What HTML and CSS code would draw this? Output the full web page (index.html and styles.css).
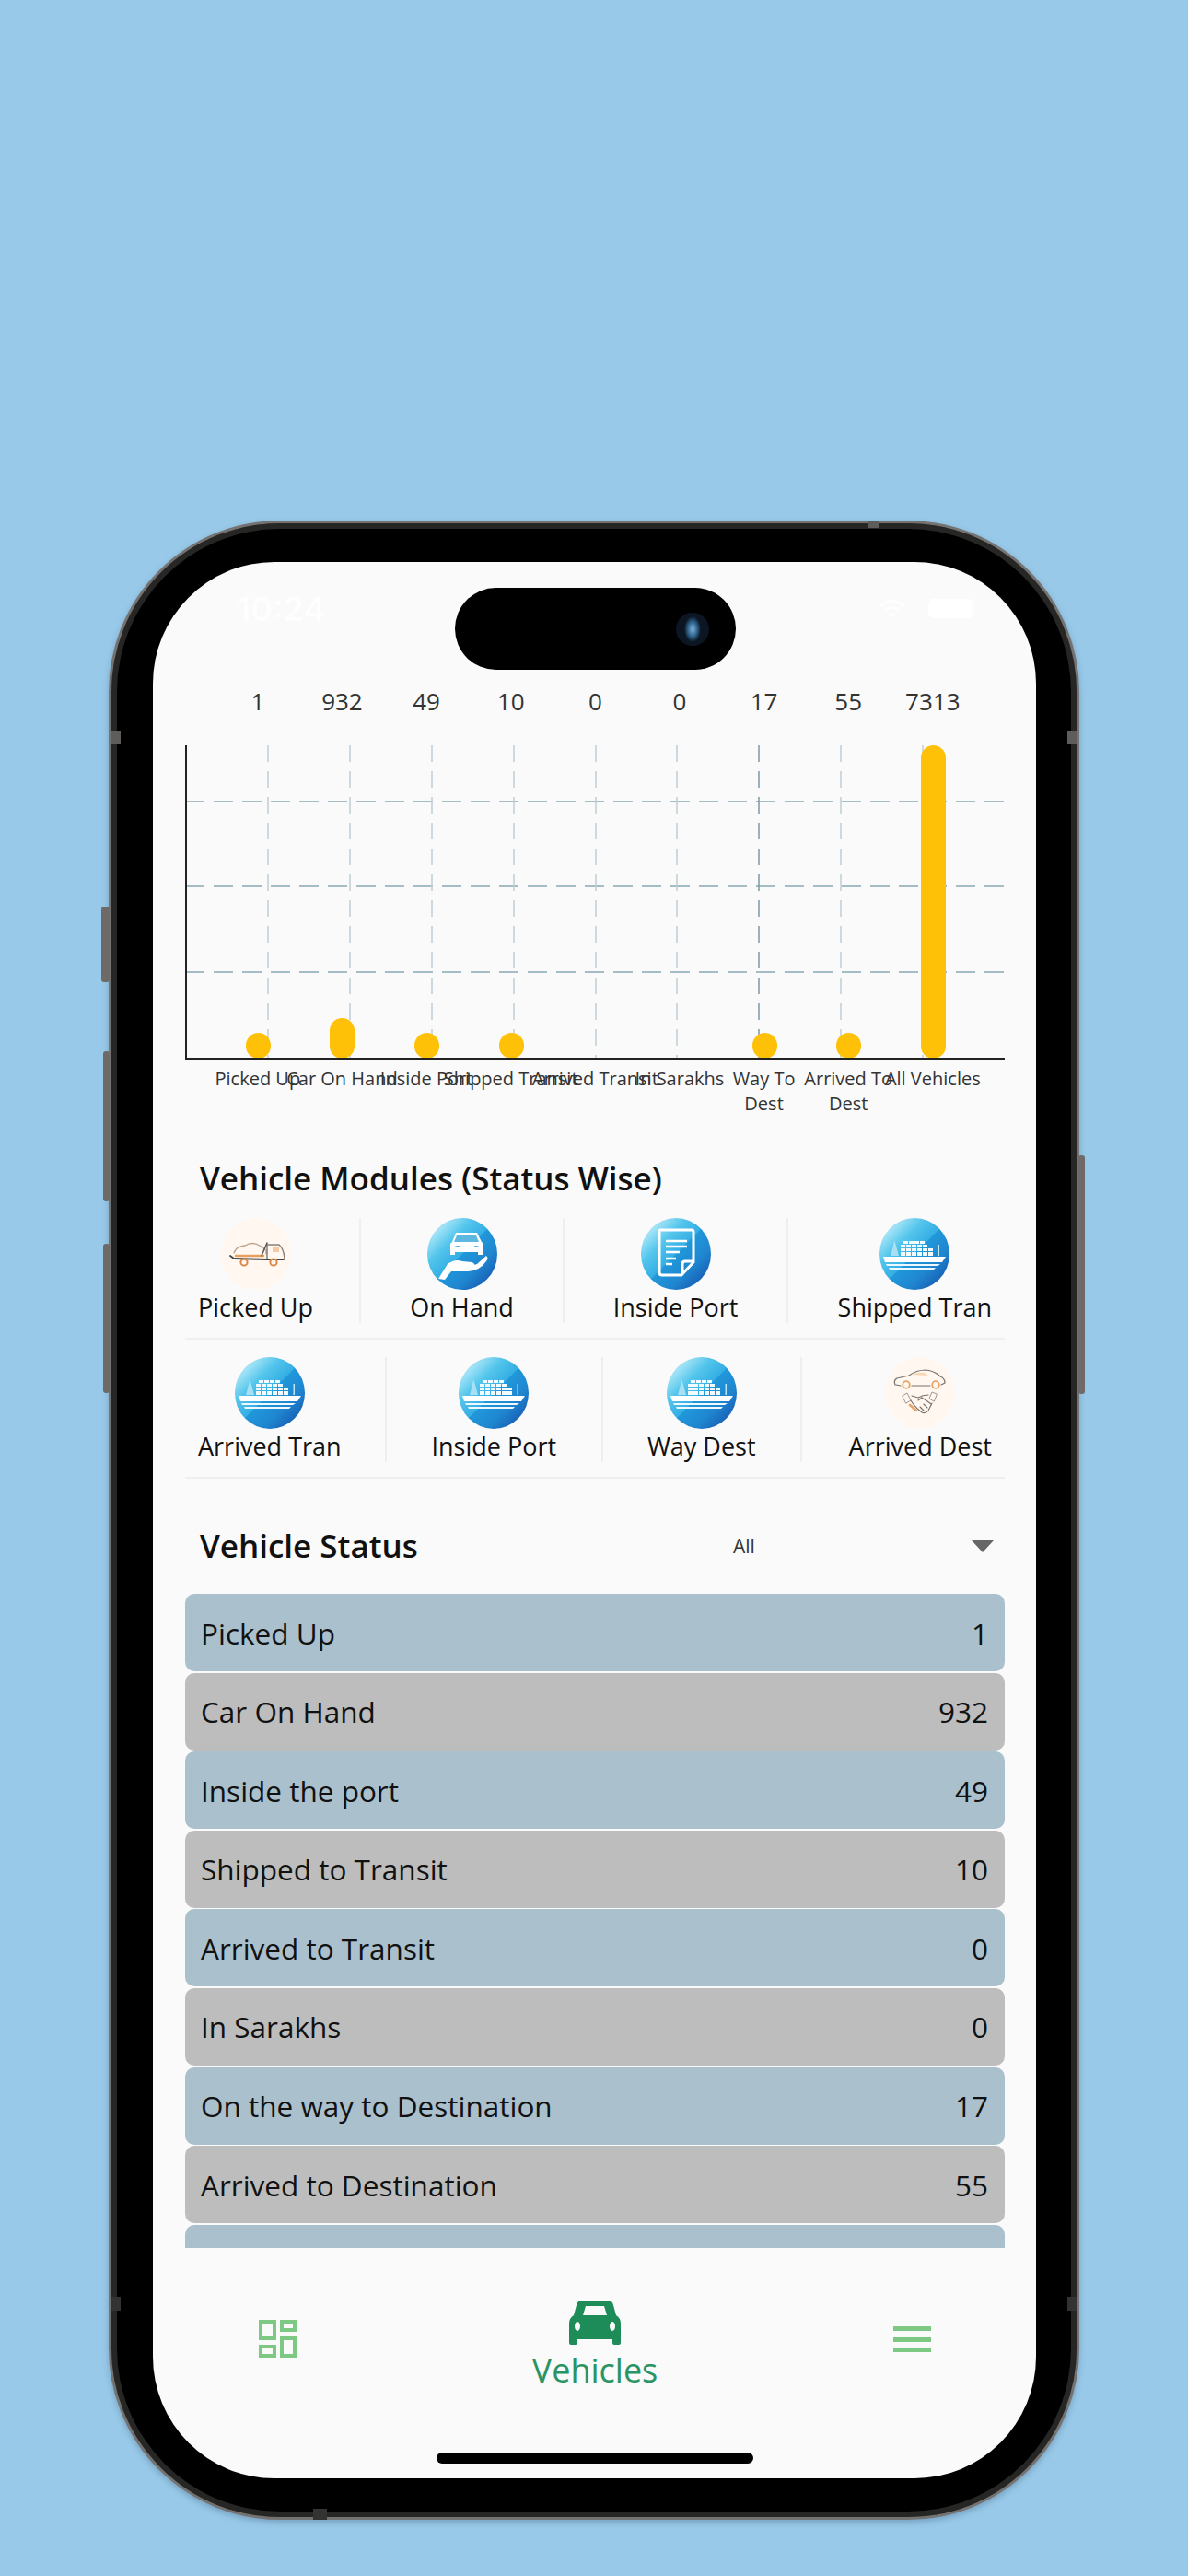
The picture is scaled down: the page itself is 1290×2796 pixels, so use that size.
FILE: index.html
```html
<!DOCTYPE html>
<html lang="en">
<head>
<meta charset="utf-8">
<title>Vehicles</title>
<link rel="stylesheet" href="styles.css">
</head>
<body>
<div class="phone">
  <span class="key key-mute"></span><span class="key key-up"></span><span class="key key-down"></span><span class="key key-side"></span>
  <span class="band band-tl"></span><span class="band band-tr"></span><span class="band band-bl"></span><span class="band band-br"></span><span class="band band-top"></span><span class="band band-bottom"></span>
  <div class="screen">
    <div class="island"><span class="lens"></span></div>
    <div class="status-bar">
      <span class="time">10:24</span>
      <span class="status-icons">
        <svg class="wifi" viewBox="0 0 30 22" width="30" height="22" fill="none" stroke="#fff" stroke-width="3.4">
          <path d="M2 8 Q15 -3 28 8"/><path d="M7 13 Q15 6 23 13"/><path d="M11.5 18 Q15 15 18.5 18"/>
        </svg>
        <span class="battery"></span>
      </span>
    </div>

    <div class="content">
      <div class="chart-grid values">
        <span>1</span><span>932</span><span>49</span><span>10</span><span>0</span><span>0</span><span>17</span><span>55</span><span>7313</span>
      </div>
      <svg class="plot" viewBox="0 0 890 342" width="890" height="342">
        <g class="grid-h">
          <line x1="0" x2="890" y1="61" y2="61"/><line x1="0" x2="890" y1="153" y2="153"/><line x1="0" x2="890" y1="246" y2="246"/>
        </g>
        <g class="grid-v">
          <line x1="90" x2="90" y1="0" y2="340"/><line x1="179" x2="179" y1="0" y2="340"/><line x1="268" x2="268" y1="0" y2="340"/><line x1="357" x2="357" y1="0" y2="340"/><line x1="446" x2="446" y1="0" y2="340"/><line x1="534" x2="534" y1="0" y2="340"/><line class="dark" x1="623" x2="623" y1="0" y2="340"/><line x1="712" x2="712" y1="0" y2="340"/><line x1="801" x2="801" y1="0" y2="340"/>
        </g>
        <g class="bars">
          <rect x="66" y="312" width="27" height="28" rx="13.5"/>
          <rect x="157" y="296" width="27" height="44" rx="13.5"/>
          <rect x="249" y="312" width="27" height="28" rx="13.5"/>
          <rect x="341" y="312" width="27" height="28" rx="13.5"/>
          <rect x="616" y="312" width="27" height="28" rx="13.5"/>
          <rect x="707" y="312" width="27" height="28" rx="13.5"/>
          <rect x="799" y="0" width="27" height="340" rx="13.5"/>
        </g>
        <path class="axis" d="M1 0V340H890"/>
      </svg>
      <div class="chart-grid labels">
        <span>Picked Up</span><span>Car On Hand</span><span>Inside Port</span><span>Shipped Transit</span><span>Arrived Transit</span><span>In Sarakhs</span><span>Way To<br>Dest</span><span>Arrived To<br>Dest</span><span>All Vehicles</span>
      </div>

      <h2 class="section-title modules-title">Vehicle Modules (Status Wise)</h2>

      <div class="module-row row-one">
        <div class="module first">
          <div class="module-inner">
            <span class="badge peach">
              <svg viewBox="0 0 76 78" width="76" height="78" fill="none" stroke-linecap="round" stroke-linejoin="round">
                <path d="M10 41 L14 44 L50 45 L68 45" stroke="#444" stroke-width="1.8"/>
                <path d="M14 38 Q16 31 26 30 Q34 25 42 30 L49 35 L49 39" stroke="#b9a28e" stroke-width="1.3"/>
                <path d="M16 41 L46 41" stroke="#e6a05f" stroke-width="2.4"/>
                <path d="M50 44 V29 H63 Q68 33 69 44" stroke="#8a8078" stroke-width="1.5"/>
                <path d="M56 31 H63 V37 H56Z" fill="#f6c9a0" stroke="none"/>
                <path d="M44 41 L50 27" stroke="#555" stroke-width="1.5"/>
                <circle cx="25" cy="48" r="3.6" stroke="#d98a48" stroke-width="2"/>
                <circle cx="57" cy="48" r="3.6" stroke="#d98a48" stroke-width="2"/>
              </svg>
            </span>
            <span class="module-label">Picked Up</span>
          </div>
        </div>
        <div class="module">
          <div class="module-inner">
            <span class="badge blue">
              <svg viewBox="0 0 76 78" width="76" height="78">
                <path d="M31 16 H54 L59 26 L61 28 V40 H55 V37 H30 V40 H25 V28 L27 26Z" fill="#fff"/>
                <path d="M32 19 H53 L56 26 H29Z M29 30 L35 32 V30Z M57 30 L51 32 V30Z" fill="#5cb8e0"/>
                <path d="M12 66 L22 50 Q30 44 38 47 L48 48 Q53 49 50 53 L40 54 L54 50 L64 41 Q67 43 64 47 Q56 58 44 58 L26 58 L19 67Z" fill="#fff"/>
              </svg>
            </span>
            <span class="module-label">On Hand</span>
          </div>
        </div>
        <div class="module">
          <div class="module-inner">
            <span class="badge blue">
              <svg viewBox="0 0 76 78" width="76" height="78" fill="none" stroke="#fff">
                <path d="M21 13 H55 Q57 13 57 15 V48 L44 62 H23 Q20 62 20 59 V15 Q20 13 21 13Z" stroke-width="3"/>
                <path d="M45 60 V50 Q45 47 48 47 H57" stroke-width="3"/>
                <path d="M27 25 H50 M27 31 H50 M27 37 H42 M27 44 H38 M27 50 H34" stroke-width="2.4"/>
              </svg>
            </span>
            <span class="module-label">Inside Port</span>
          </div>
        </div>
        <div class="module last">
          <div class="module-inner">
            <span class="badge blue"><svg viewBox="0 0 76 78" width="76" height="78"><use href="#ship"/></svg></span>
            <span class="module-label">Shipped Tran</span>
          </div>
        </div>
      </div>

      <div class="module-row row-two">
        <div class="module first">
          <div class="module-inner">
            <span class="badge blue">
              <svg viewBox="0 0 76 78" width="76" height="78">
                <g id="ship">
                  <path d="M4 42 H72 L68 48 H6Z" fill="#fff"/>
                  <path d="M7 50 H66 L63 52 H8Z M10 54 H61 L59 56 H11Z" fill="#eef9fd"/>
                  <path d="M12 41 L15 30 L16 24 L18 30 L21 41Z" fill="#bfe6f5" fill-opacity="0.8"/>
                  <path d="M23 29 H28 V32 H23Z M29 29 H34 V32 H29Z M35 29 H40 V32 H35Z M41 29 H46 V32 H41Z M47 29 H52 V32 H47Z M23 33 H28 V36 H23Z M29 33 H34 V36 H29Z M35 33 H40 V36 H35Z M41 33 H46 V36 H41Z M47 33 H52 V36 H47Z M53 33 H58 V36 H53Z M23 37 H28 V41 H23Z M29 37 H34 V41 H29Z M35 37 H40 V41 H35Z M41 37 H46 V41 H41Z M47 37 H52 V41 H47Z M53 37 H58 V41 H53Z M26 25 H31 V28 H26Z M32 25 H37 V28 H32Z M38 25 H43 V28 H38Z M44 25 H49 V28 H44Z" fill="#f2fbfe"/>
                  <path d="M63.500 41 V29 H65 V41Z" fill="#bfe6f5"/>
                </g>
              </svg>
            </span>
            <span class="module-label">Arrived Tran</span>
          </div>
        </div>
        <div class="module">
          <div class="module-inner">
            <span class="badge blue"><svg viewBox="0 0 76 78" width="76" height="78"><use href="#ship"/></svg></span>
            <span class="module-label">Inside Port</span>
          </div>
        </div>
        <div class="module">
          <div class="module-inner">
            <span class="badge blue"><svg viewBox="0 0 76 78" width="76" height="78"><use href="#ship"/></svg></span>
            <span class="module-label">Way Dest</span>
          </div>
        </div>
        <div class="module last">
          <div class="module-inner">
            <span class="badge peach">
              <svg viewBox="0 0 76 78" width="76" height="78" fill="none" stroke-linecap="round" stroke-linejoin="round">
                <path d="M11 30 Q9 25 13 23 L26 20 Q34 14 44 14 Q54 15 60 21 Q65 23 65 28 L61 30 M49 31 H29 M17 31 L12 30" stroke="#77716c" stroke-width="1.2"/>
                <path d="M29 19 Q35 16 43 17 L47 20 Z" fill="#f9d7b5" stroke="none"/>
                <circle cx="23" cy="30" r="3.8" stroke="#e8a468" stroke-width="1.8"/>
                <circle cx="55" cy="30" r="3.8" stroke="#e8a468" stroke-width="1.8"/>
                <path d="M19 42 L24 39 L28 47 L23 50Z M56 40 L51 38 L48 45 L53 48Z" stroke="#a0968e" stroke-width="1"/>
                <path d="M29 42 L36 44 Q41 41 47 41 M28 47 Q32 54 40 60 Q44 62 47 58 L51 50 M36 47 L40 44 L46 48 L50 51 M38 54 L42 58 M42 51 L46 55" stroke="#77716c" stroke-width="1.1"/>
                <path d="M27 52 L34 58" stroke="#e8a468" stroke-width="2.6"/>
              </svg>
            </span>
            <span class="module-label">Arrived Dest</span>
          </div>
        </div>
      </div>

      <div class="status-head">
        <h2 class="section-title">Vehicle Status</h2>
        <span class="select-value">All</span>
        <span class="select-caret"></span>
      </div>

      <ul class="status-list">
        <li class="status-row"><span>Picked Up</span><span>1</span></li>
        <li class="status-row"><span>Car On Hand</span><span>932</span></li>
        <li class="status-row"><span>Inside the port</span><span>49</span></li>
        <li class="status-row"><span>Shipped to Transit</span><span>10</span></li>
        <li class="status-row"><span>Arrived to Transit</span><span>0</span></li>
        <li class="status-row"><span>In Sarakhs</span><span>0</span></li>
        <li class="status-row"><span>On the way to Destination</span><span>17</span></li>
        <li class="status-row"><span>Arrived to Destination</span><span>55</span></li>
        <li class="status-row"></li>
      </ul>
    </div>

    <nav class="tabbar">
      <svg class="tab-grid" viewBox="0 0 41 41" width="41" height="41" fill="none" stroke="#7dc883" stroke-width="4">
        <rect x="2" y="2" width="15" height="18"/><rect x="25" y="2" width="14" height="9"/><rect x="2" y="29" width="15" height="10"/><rect x="25" y="20" width="14" height="19"/>
      </svg>
      <div class="tab-active">
        <svg viewBox="0 0 56 48" width="56" height="48">
          <path fill="#1e8c58" fill-rule="evenodd" d="M14 0 H42 Q47 0 48 5 L51 16 Q56 19 56 25 V46 Q56 48 54 48 H49 Q47 48 47 46 V42 H9 V46 Q9 48 7 48 H2 Q0 48 0 46 V25 Q0 19 5 16 L8 5 Q9 0 14 0Z M18 6 L15 16 H41 L38 6Z M9 23 A3 5 0 1 0 9 33 A3 5 0 1 0 9 23Z M47 23 A3 5 0 1 0 47 33 A3 5 0 1 0 47 23Z"/>
        </svg>
        <span class="tab-label">Vehicles</span>
      </div>
      <div class="tab-menu"><span></span><span></span><span></span></div>
    </nav>
    <span class="home-indicator"></span>
  </div>
</div>
</body>
</html>
```

FILE: styles.css
```css
* { box-sizing: border-box; }

html, body { margin: 0; padding: 0; }

body {
  width: 1290px;
  height: 2796px;
  background: #98c9e8;
  padding: 565px 0 0 118px;
  font-family: "Open Sans", "Noto Sans", sans-serif;
  color: #111;
  overflow: hidden;
}

.phone {
  position: relative;
  width: 1054px;
  height: 2170px;
  padding: 45px 47px 45px 48px;
  background: #000;
  border-radius: 186px;
  border: 3px solid #757372;
  box-shadow: inset 0 0 0 6px #262625, 0 3px 6px rgba(60, 90, 120, 0.35);
}

.key { position: absolute; background: #6e6a68; border-radius: 3px; }
.key-mute { left: -11px; top: 416px; width: 9px; height: 82px; }
.key-up { left: -9px; top: 573px; width: 7px; height: 163px; }
.key-down { left: -9px; top: 782px; width: 7px; height: 162px; }
.key-side { right: -9px; top: 686px; width: 7px; height: 259px; }

.band { position: absolute; background: #5e5d5c; }
.band-tl { left: -1px; top: 225px; width: 11px; height: 15px; }
.band-tr { right: -1px; top: 225px; width: 11px; height: 15px; }
.band-bl { left: -1px; top: 1925px; width: 11px; height: 15px; background: #333; }
.band-br { right: -1px; top: 1925px; width: 11px; height: 15px; background: #333; }
.band-top { top: -3px; left: 822px; width: 12px; height: 8px; }
.band-bottom { bottom: -3px; left: 219px; width: 15px; height: 12px; background: #333; }

.screen {
  position: relative;
  margin: -3px 0 0 -3px;
  width: 959px;
  height: 2080px;
  background: #fafafa;
  border-radius: 132px;
  overflow: hidden;
  display: flex;
  flex-direction: column;
}

.island {
  position: absolute;
  left: 328px;
  top: 28px;
  width: 305px;
  height: 89px;
  border-radius: 45px;
  background: #000;
}

.lens {
  position: absolute;
  left: 240px;
  top: 27px;
  width: 36px;
  height: 36px;
  border-radius: 50%;
  background: radial-gradient(ellipse 9px 14px at 50% 50%, #7fb4dc 0, #2c5d86 60%, #0b1622 100%), #06080c;
}

.status-bar {
  height: 130px;
  flex: none;
  display: flex;
  justify-content: space-between;
  padding: 29px 68px 0 91px;
  color: #fff;
}

.time { font-family: "Inter", sans-serif; font-size: 36px; line-height: 44px; font-weight: 600; opacity: 0.85; }

.status-icons { display: flex; gap: 24px; align-items: flex-start; padding-top: 11px; }
.wifi { opacity: 0.8; }
.battery { width: 49px; height: 21px; border-radius: 6px; background: #fff; }

.content { padding: 0 34px 0 35px; flex: none; }

.chart-grid {
  display: grid;
  grid-template-columns: repeat(9, 91.625px);
  margin-left: 33px;
  text-align: center;
}

.chart-grid span { white-space: nowrap; justify-self: center; }

.values { height: 42px; font-size: 26px; line-height: 42px; color: #333; }

.plot { display: block; margin-top: 27px; }

.grid-h line { stroke: #a4bcc4; stroke-width: 2; stroke-dasharray: 21 10; }
.grid-v line { stroke: #c0ced6; stroke-width: 1.5; stroke-dasharray: 18 10; }
.grid-v line.dark { stroke: #7f99a8; }
.bars rect { fill: #ffc107; }
.axis { fill: none; stroke: #222; stroke-width: 2; }

.labels { margin-top: 6px; font-size: 20px; line-height: 27px; color: #333; height: 54px; }

.section-title { margin: 0; font-size: 35px; line-height: 50px; font-weight: 600; color: #111; }

.modules-title { margin: 43px 0 0 16px; }

.module-row {
  display: grid;
  padding-bottom: 16px;
  border-bottom: 2px solid #efefef;
}

.row-one { grid-template-columns: 191px 221px 243px 235px; margin-top: 18px; }
.row-two { grid-template-columns: 219px 234.5px 216.5px 220px; margin-top: 19px; }

.module {
  display: flex;
  justify-content: center;
  height: 114px;
  border-right: 2px solid #efefef;
}

.module.first { justify-content: flex-start; padding-left: 14px; }
.module.last { justify-content: flex-end; padding-right: 14px; border-right: 0; }

.module-inner { display: flex; flex-direction: column; align-items: center; }

.badge { display: block; width: 76px; height: 78px; border-radius: 50%; flex: none; }
.badge svg { display: block; }

.peach { background: #fff7f0; }

.blue {
  background:
    radial-gradient(circle at 50% 50%, rgba(255, 255, 255, 0) 65%, rgba(10, 70, 140, 0.2) 100%),
    linear-gradient(135deg, #b8ecfa 12%, #55c6ec 32%, #34aee4 49.8%, #2198da 50.2%, #1f86d0 70%, #1658b0 92%);
}

.module-label { font-size: 27px; line-height: 36px; margin-top: 1px; font-weight: 500; white-space: nowrap; color: #111; }

.status-head {
  display: flex;
  align-items: center;
  margin-top: 48px;
  height: 50px;
  padding-left: 16px;
}

.status-head .section-title { width: 579px; }
.select-value { font-size: 21px; color: #333; width: 259px; }
.select-caret {
  width: 0;
  height: 0;
  border-left: 12px solid transparent;
  border-right: 12px solid transparent;
  border-top: 13px solid #666;
}

.status-list {
  list-style: none;
  margin: 27px 0 0;
  padding: 0;
  height: 710px;
  overflow: hidden;
  display: flex;
  flex-direction: column;
  gap: 1.6px;
}

.status-row {
  flex: none;
  height: 84px;
  padding: 0 18px 0 17px;
  border-radius: 10px;
  background: #aac0cc;
  display: flex;
  align-items: center;
  justify-content: space-between;
  font-size: 31.5px;
  font-weight: 500;
  color: #111;
}

.status-row:nth-child(even) { background: #bdbdbd; }

.tabbar {
  display: flex;
  justify-content: space-between;
  align-items: flex-start;
  flex: 1;
  padding: 57px 114px 0 115px;
}

.tab-grid { display: block; margin-top: 21px; }

.tab-active { display: flex; flex-direction: column; align-items: center; }
.tab-active svg { display: block; }

.tab-label { font-size: 36px; line-height: 50px; color: #2a9463; margin-top: 3px; }

.tab-menu { width: 41px; margin-top: 28px; display: flex; flex-direction: column; gap: 6.5px; }
.tab-menu span { display: block; height: 5px; background: #7dc883; }

.home-indicator {
  position: absolute;
  left: 308px;
  bottom: 16px;
  width: 344px;
  height: 12px;
  border-radius: 6px;
  background: #000;
}
```
